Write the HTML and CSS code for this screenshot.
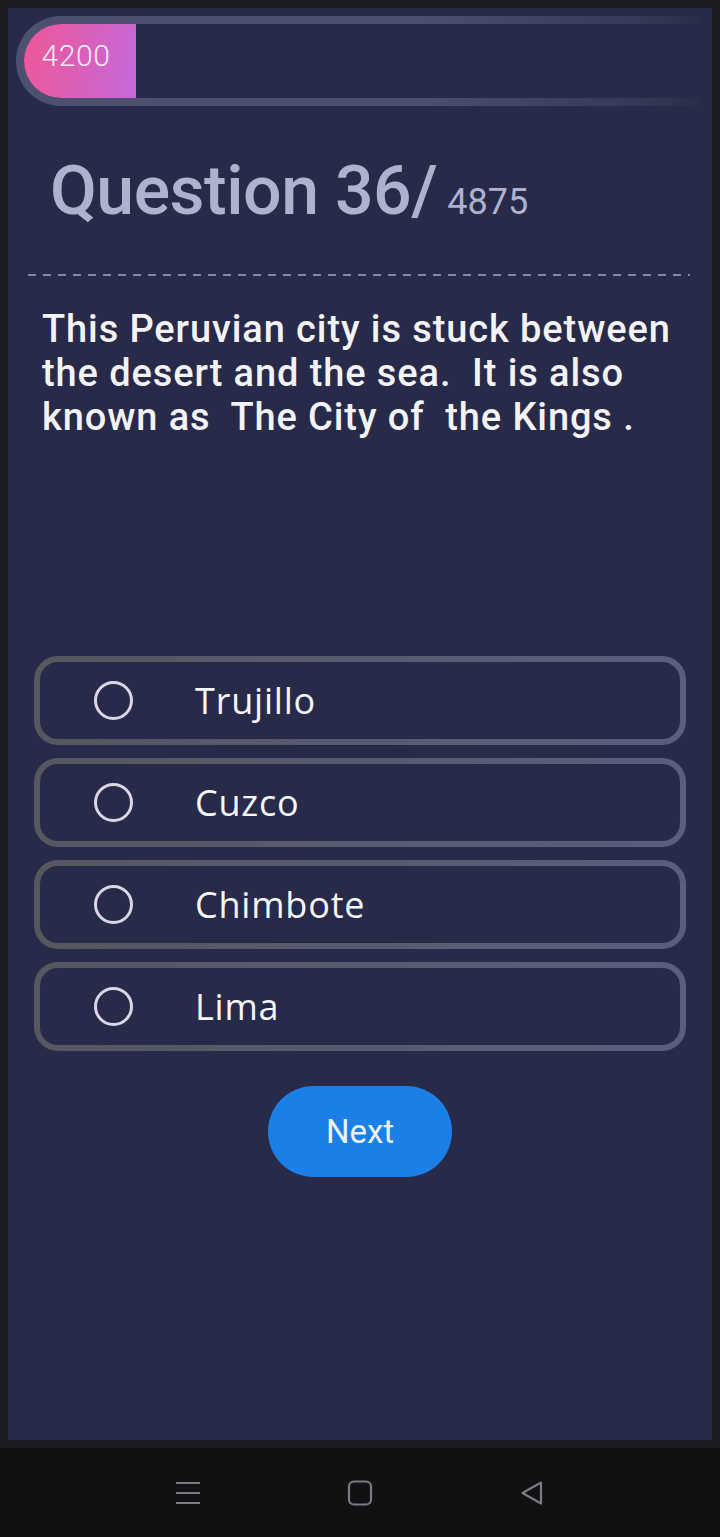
FILE: index.html
```html
<!DOCTYPE html>
<html>
<head>
<meta charset="utf-8">
<link rel="stylesheet" href="styles.css">
</head>
<body>
<main class="screen">
  <div class="progress">
    <div class="progress-track">
      <div class="progress-fill">4200</div>
    </div>
  </div>

  <h1 class="title">Question 36/<span class="total">4875</span></h1>
  <div class="dash"></div>

  <p class="question">This Peruvian city is stuck between the desert and the sea.&nbsp; It is also known as&nbsp; The City of&nbsp; the Kings .</p>

  <ul class="options">
    <li class="option"><span class="radio"></span><span class="label">Trujillo</span></li>
    <li class="option"><span class="radio"></span><span class="label">Cuzco</span></li>
    <li class="option"><span class="radio"></span><span class="label">Chimbote</span></li>
    <li class="option"><span class="radio"></span><span class="label">Lima</span></li>
  </ul>

  <div class="actions">
    <button class="next">Next</button>
  </div>
</main>

<nav class="navbar">
  <svg class="nav-icon" width="26" height="26" viewBox="0 0 26 26">
    <path d="M1 3h24M1 13h24M1 23h24" stroke="#7b7b80" stroke-width="2.2" fill="none"/>
  </svg>
  <svg class="nav-icon" width="26" height="26" viewBox="0 0 26 26">
    <rect x="2" y="1.5" width="22" height="23" rx="5" stroke="#7b7b80" stroke-width="2.2" fill="none"/>
  </svg>
  <svg class="nav-icon" width="26" height="26" viewBox="0 0 26 26">
    <path d="M22 2.5 L3.5 13 L22 23.5 Z" stroke="#7b7b80" stroke-width="2.2" stroke-linejoin="round" fill="none"/>
  </svg>
</nav>
</body>
</html>
```

FILE: styles.css
```css
html, body {
  margin: 0;
  padding: 0;
}
body {
  background: #1c1c21;
  width: 720px;
  height: 1537px;
  overflow: hidden;
  font-family: Roboto, "Liberation Sans", sans-serif;
}
.screen {
  margin: 8px 8px 0;
  height: 1432px;
  background: #272a48;
  box-sizing: border-box;
  padding: 8px 0 0;
  display: flex;
  flex-direction: column;
}
.progress {
  margin-left: 8px;
  width: 684px;
  height: 90px;
  box-sizing: border-box;
  padding: 8px 0 8px 8px;
  border-radius: 45px 0 0 45px;
  background: linear-gradient(to right, #4d5170 0%, #4b4f6e 60%, #363a58 90%, #2a2d4a 100%);
}
.progress-track {
  height: 74px;
  background: #272a48;
  border-radius: 37px 0 0 37px;
}
.progress-fill {
  width: 112px;
  height: 74px;
  box-sizing: border-box;
  padding: 0 8px 12px 0;
  border-radius: 37px 0 0 37px;
  background: linear-gradient(100deg, #ee5897 0%, #d661c0 60%, #c46adc 100%);
  color: #fcecf8;
  font-size: 30px;
  font-weight: 300;
  letter-spacing: 0.6px;
  display: flex;
  align-items: center;
  justify-content: center;
}
.title {
  margin: 45px 0 0 42px;
  font-size: 68px;
  line-height: 80px;
  font-weight: 500;
  color: #afb2cf;
  letter-spacing: -0.5px;
}
.total {
  font-size: 36px;
  font-weight: 400;
  letter-spacing: 0;
  margin-left: 10px;
}
.dash {
  margin: 32px 22px 0 20px;
  height: 2px;
  background: repeating-linear-gradient(to right, #8588a6 0 8px, transparent 8px 15px);
}
.question {
  margin: 31px 20px 0 34px;
  font-size: 38px;
  line-height: 44px;
  font-weight: 500;
  letter-spacing: 0.9px;
  color: #f2f2f7;
}
.options {
  list-style: none;
  margin: 217px 0 0 26px;
  padding: 0;
  width: 652px;
  display: flex;
  flex-direction: column;
  gap: 13px;
}
.option {
  position: relative;
  height: 89px;
  box-sizing: border-box;
  border-radius: 24px;
  background: linear-gradient(to right, #56575f, #5a5e7f);
  display: flex;
  align-items: center;
}
.option::after {
  content: "";
  position: absolute;
  inset: 6px;
  border-radius: 18px;
  background: #272a48;
}
.radio,
.label {
  position: relative;
  z-index: 1;
}
.radio {
  width: 39px;
  height: 39px;
  box-sizing: border-box;
  border: 3.5px solid #d9d6e8;
  border-radius: 50%;
  margin-left: 60px;
}
.label {
  margin-left: 62px;
  font-size: 36px;
  letter-spacing: 0.8px;
  color: #f6f6fa;
  font-family: "Open Sans", "Noto Sans", sans-serif;
}
.actions {
  display: flex;
  justify-content: center;
  margin-top: 35px;
}
.next {
  width: 184px;
  height: 91px;
  border: none;
  border-radius: 46px;
  background: #1a7fe6;
  color: #eaf2ff;
  font-family: Roboto, "Liberation Sans", sans-serif;
  font-size: 33px;
  font-weight: 400;
}
.navbar {
  margin-top: 8px;
  height: 89px;
  background: #111113;
  display: flex;
  justify-content: center;
  align-items: center;
  gap: 146px;
}
.nav-icon {
  display: block;
}
```
